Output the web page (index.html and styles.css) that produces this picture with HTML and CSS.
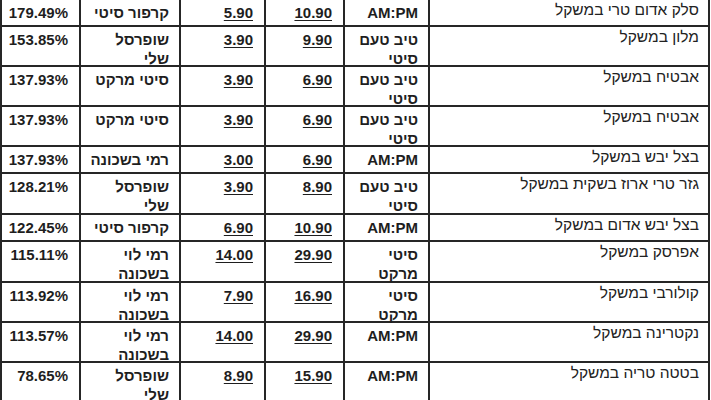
FILE: index.html
```html
<!DOCTYPE html>
<html lang="he">
<head>
<meta charset="utf-8">
<link rel="stylesheet" href="styles.css">
</head>
<body>
<div class="sheet" dir="rtl">
  <div class="c name">סלק אדום טרי במשקל</div>
  <div class="c b">AM:PM</div>
  <div class="c b num"><u>10.90</u></div>
  <div class="c b num"><u>5.90</u></div>
  <div class="c b">קרפור סיטי</div>
  <div class="c b num">179.49%</div>

  <div class="c name">מלון במשקל</div>
  <div class="c b">טיב טעם<br>סיטי</div>
  <div class="c b num"><u>9.90</u></div>
  <div class="c b num"><u>3.90</u></div>
  <div class="c b">שופרסל<br>שלי</div>
  <div class="c b num">153.85%</div>

  <div class="c name">אבטיח במשקל</div>
  <div class="c b">טיב טעם<br>סיטי</div>
  <div class="c b num"><u>6.90</u></div>
  <div class="c b num"><u>3.90</u></div>
  <div class="c b">סיטי מרקט</div>
  <div class="c b num">137.93%</div>

  <div class="c name">אבטיח במשקל</div>
  <div class="c b">טיב טעם<br>סיטי</div>
  <div class="c b num"><u>6.90</u></div>
  <div class="c b num"><u>3.90</u></div>
  <div class="c b">סיטי מרקט</div>
  <div class="c b num">137.93%</div>

  <div class="c name">בצל יבש במשקל</div>
  <div class="c b">AM:PM</div>
  <div class="c b num"><u>6.90</u></div>
  <div class="c b num"><u>3.00</u></div>
  <div class="c b">רמי בשכונה</div>
  <div class="c b num">137.93%</div>

  <div class="c name">גזר טרי ארוז בשקית במשקל</div>
  <div class="c b">טיב טעם<br>סיטי</div>
  <div class="c b num"><u>8.90</u></div>
  <div class="c b num"><u>3.90</u></div>
  <div class="c b">שופרסל<br>שלי</div>
  <div class="c b num">128.21%</div>

  <div class="c name">בצל יבש אדום במשקל</div>
  <div class="c b">AM:PM</div>
  <div class="c b num"><u>10.90</u></div>
  <div class="c b num"><u>6.90</u></div>
  <div class="c b">קרפור סיטי</div>
  <div class="c b num">122.45%</div>

  <div class="c name">אפרסק במשקל</div>
  <div class="c b">סיטי<br>מרקט</div>
  <div class="c b num"><u>29.90</u></div>
  <div class="c b num"><u>14.00</u></div>
  <div class="c b">רמי לוי<br>בשכונה</div>
  <div class="c b num">115.11%</div>

  <div class="c name">קולורבי במשקל</div>
  <div class="c b">סיטי<br>מרקט</div>
  <div class="c b num"><u>16.90</u></div>
  <div class="c b num"><u>7.90</u></div>
  <div class="c b">רמי לוי<br>בשכונה</div>
  <div class="c b num">113.92%</div>

  <div class="c name">נקטרינה במשקל</div>
  <div class="c b">AM:PM</div>
  <div class="c b num"><u>29.90</u></div>
  <div class="c b num"><u>14.00</u></div>
  <div class="c b">רמי לוי<br>בשכונה</div>
  <div class="c b num">113.57%</div>

  <div class="c name">בטטה טריה במשקל</div>
  <div class="c b">AM:PM</div>
  <div class="c b num"><u>15.90</u></div>
  <div class="c b num"><u>8.90</u></div>
  <div class="c b">שופרסל<br>שלי</div>
  <div class="c b num">78.65%</div>
</div>
</body>
</html>
```

FILE: styles.css
```css
html, body {
  margin: 0;
  padding: 0;
  background: #ffffff;
  overflow: hidden;
}

.sheet {
  width: 706px;
  margin-top: -2px;
  padding: 2px;
  display: grid;
  grid-template-columns: 278px 83px 77px 83px 98px 77px;
  grid-template-rows: 25px 38px 38px 38px 25px 39px 25px 39px 38px 38px 38px;
  gap: 2px;
  background: #262626;
  direction: rtl;
}

.c {
  background: #ffffff;
  color: #1e1e1e;
  text-align: right;
  white-space: nowrap;
  box-sizing: border-box;
  min-height: 0;
}

.name {
  font-family: "Liberation Sans", Arial, sans-serif;
  font-size: 15.5px;
  line-height: 20px;
  padding: 0 9px 0 0;
  color: #222;
}

.b {
  font-family: "Liberation Sans", Arial, sans-serif;
  font-weight: bold;
  font-size: 15px;
  line-height: 19px;
  padding: 3px 10px 0 0;
}

.num {
  direction: ltr;
  padding: 3px 11px 0 0;
}

.num u {
  text-decoration-thickness: 1px;
  text-underline-offset: 2px;
}
```
